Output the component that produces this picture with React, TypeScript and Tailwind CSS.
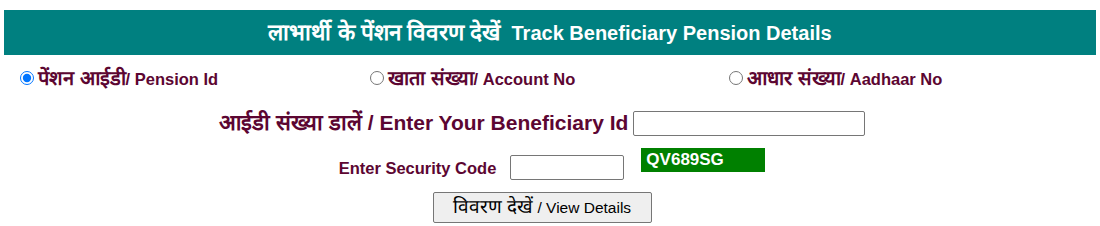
import React, { useState } from 'react';

const maroon = 'text-[#5c0632]';

export default function App() {
  const [mode, setMode] = useState('pension');

  return (
    <div className="w-[1100px] h-[226px] bg-white font-['Liberation_Sans',Arial,sans-serif] overflow-hidden">
      <div className="pt-[10px] px-[4px]">
        <div className="h-[45px] bg-[#008080] flex items-center justify-center">
          <h2 className="text-white font-bold text-[20px] pt-[1px]">
            <span className="text-[22.5px]">लाभार्थी के पेंशन विवरण देखें</span>&nbsp; Track Beneficiary Pension Details
          </h2>
        </div>
      </div>

      <div className={`flex items-center h-[46px] ${maroon} font-bold text-[16.5px]`}>
        <label className="w-[350px] ml-[20px] flex items-center gap-[4px]">
          <input
            type="radio"
            name="mode"
            checked={mode === 'pension'}
            onChange={() => setMode('pension')}
            className="m-0 w-[14px] h-[14px]"
          />
          <span><span className="text-[20px]">पेंशन आईडी</span>/ Pension Id</span>
        </label>
        <label className="w-[359px] flex items-center gap-[4px]">
          <input
            type="radio"
            name="mode"
            checked={mode === 'account'}
            onChange={() => setMode('account')}
            className="m-0 w-[14px] h-[14px]"
          />
          <span><span className="text-[20px]">खाता संख्या</span>/ Account No</span>
        </label>
        <label className="flex items-center gap-[4px]">
          <input
            type="radio"
            name="mode"
            checked={mode === 'aadhaar'}
            onChange={() => setMode('aadhaar')}
            className="m-0 w-[14px] h-[14px]"
          />
          <span><span className="text-[20px]">आधार संख्या</span>/ Aadhaar No</span>
        </label>
      </div>

      <div className={`flex items-center justify-center gap-[5px] h-[44px] pr-[16px] ${maroon} font-bold`}>
        <span className="text-[21px] leading-[24px]"><span className="text-[22px]">आईडी संख्या डालें</span> / Enter Your Beneficiary Id</span>
        <input type="text" className="w-[232px] h-[25px] border border-[#767676] rounded-[2px] bg-white" />
      </div>

      <div className="flex items-start justify-center h-[41px] pl-[4px]">
        <span className={`${maroon} font-bold text-[16.5px] mt-[11px]`}>Enter Security Code</span>
        <input type="text" className="ml-[14px] mt-[10px] w-[114px] h-[25px] border border-[#767676] rounded-[2px] bg-white" />
        <div className="ml-[17px] mt-[3px] w-[124px] h-[24px] bg-[#008000] text-white font-bold text-[17px] leading-[24px] pl-[5px]">
          QV689SG
        </div>
      </div>

      <div className="flex justify-center mt-[6px] pr-[16px]">
        <button
          type="button"
          className="w-[219px] h-[31px] bg-[#efefef] border border-[#767676] rounded-[2px] text-[15.5px] text-black"
        >
          <span className="text-[19px]">विवरण देखें</span> / View Details
        </button>
      </div>
    </div>
  );
}
